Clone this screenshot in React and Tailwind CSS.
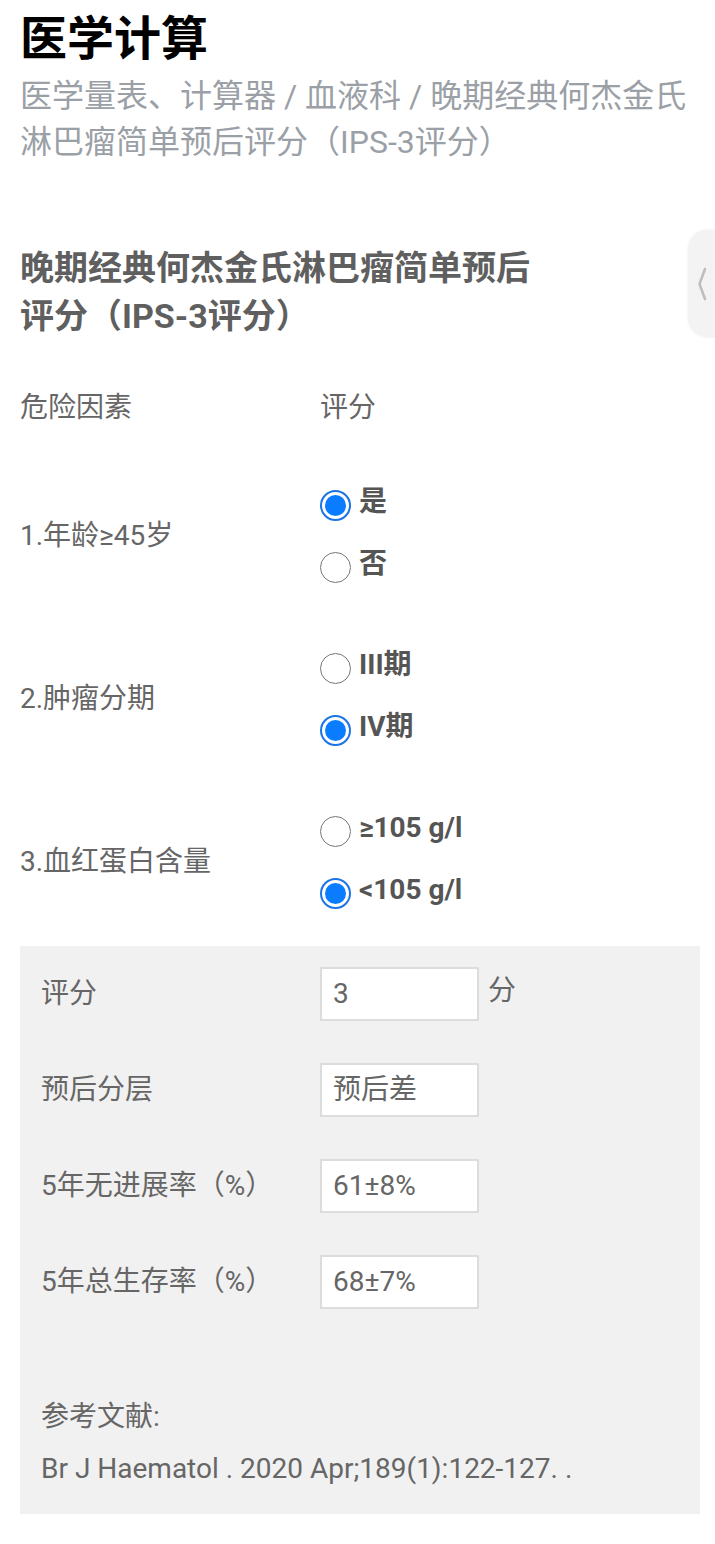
import { useState } from "react";

const questions = [
  { label: "1.年龄≥45岁", options: ["是", "否"], points: [1, 0] },
  { label: "2.肿瘤分期", options: ["III期", "IV期"], points: [0, 1] },
  { label: "3.血红蛋白含量", options: ["≥105 g/l", "<105 g/l"], points: [0, 1] },
];

function Radio({ checked }) {
  return checked ? (
    <span className="mt-[6px] flex h-[31px] w-[31px] shrink-0 items-center justify-center rounded-full border-2 border-[#1a73e8] bg-white">
      <span className="h-[21px] w-[21px] rounded-full bg-[#0a7cff]" />
    </span>
  ) : (
    <span className="mt-[6px] h-[31px] w-[31px] shrink-0 rounded-full border-[1.5px] border-[#767676] bg-white" />
  );
}

function ResultRow({ label, value, unit }) {
  return (
    <div className="flex h-[54px] items-center">
      <div className="w-[279px]">{label}</div>
      <div className="flex h-[54px] w-[159px] items-center border-2 border-[#dcdcdc] bg-white px-[11px]">
        {value}
      </div>
      {unit && <span className="-mt-[6px] ml-[9px]">{unit}</span>}
    </div>
  );
}

export default function App() {
  const [answers, setAnswers] = useState([0, 1, 1]);

  const score = questions.reduce((sum, q, i) => sum + q.points[answers[i]], 0);

  return (
    <div className="relative min-h-[1544px] bg-white pl-[20px] pr-[15px] font-['Roboto','Noto_Sans_CJK_SC',sans-serif]">
      <h1 className="pt-[11px] text-[47px] font-bold leading-[56px] text-black">医学计算</h1>
      <p className="mt-[6px] text-[32px] leading-[46px] text-[#9aa0a6]">
        医学量表、计算器 / 血液科 / 晚期经典何杰金氏淋巴瘤简单预后评分（IPS-3评分）
      </p>

      <h2 className="mt-[79px] w-[520px] text-[34px] font-bold leading-[48px] text-[#5f5f5f]">
        晚期经典何杰金氏淋巴瘤简单预后评分（IPS-3评分）
      </h2>

      <div className="text-[28px] text-[#666]">
        <div className="mt-[40px] grid h-[56px] grid-cols-[300px_1fr] items-center">
          <div>危险因素</div>
          <div>评分</div>
        </div>

        {questions.map((q, qi) => (
          <div
            key={q.label}
            className={`grid grid-cols-[300px_1fr] ${qi === 0 ? "mt-[35px]" : "mt-[39px]"}`}
          >
            <div className="flex items-center pt-[5px]">{q.label}</div>
            <div>
              {q.options.map((opt, oi) => (
                <button
                  key={opt}
                  type="button"
                  onClick={() =>
                    setAnswers((prev) => prev.map((a, i) => (i === qi ? oi : a)))
                  }
                  className="flex h-[62px] items-center gap-[8px] text-left font-bold text-[#555]"
                >
                  <Radio checked={answers[qi] === oi} />
                  <span>{opt}</span>
                </button>
              ))}
            </div>
          </div>
        ))}

        <div className="mt-[25px] bg-[#f1f1f1] pb-[19px] pl-[21px] pt-[21px]">
          <div className="flex flex-col gap-[42px]">
            <ResultRow label="评分" value={score} unit="分" />
            <ResultRow label="预后分层" value="预后差" />
            <ResultRow label="5年无进展率（%）" value="61±8%" />
            <ResultRow label="5年总生存率（%）" value="68±7%" />
          </div>
          <div className="mt-[82px] leading-[52px]">
            <div>参考文献:</div>
            <div>Br J Haematol . 2020 Apr;189(1):122-127. .</div>
          </div>
        </div>
      </div>

      <div className="absolute right-0 top-[230px] flex h-[107px] w-[27px] items-center justify-center rounded-l-[20px] bg-[#f3f3f3] shadow-[0_0_3px_rgba(0,0,0,0.08)]">
        <svg width="10" height="34" viewBox="0 0 10 34" fill="none">
          <path d="M8 2 L2.5 17 L8 32" stroke="#bdbdbd" strokeWidth="2.5" strokeLinecap="round" strokeLinejoin="round" />
        </svg>
      </div>
    </div>
  );
}
